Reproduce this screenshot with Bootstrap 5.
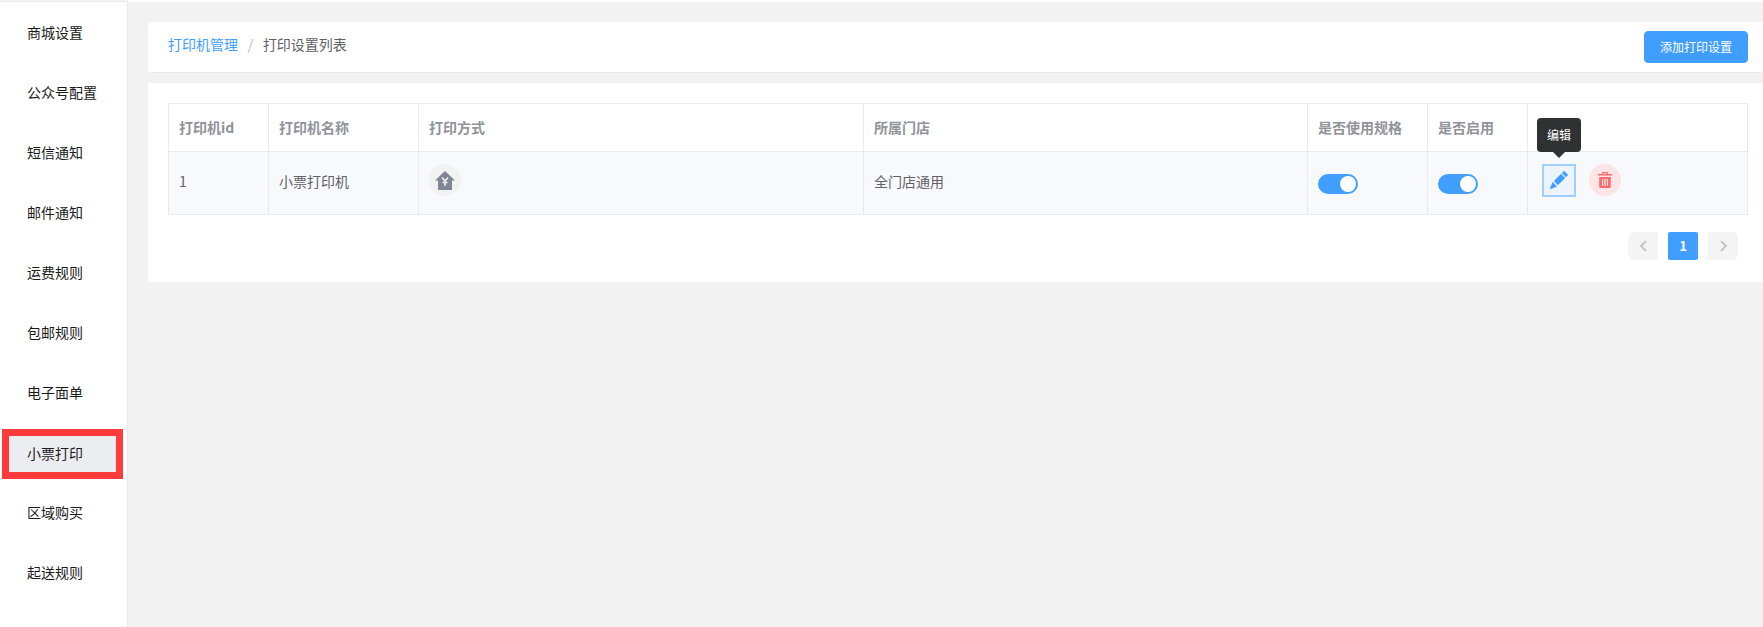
<!DOCTYPE html>
<html lang="zh">
<head>
<meta charset="utf-8">
<title>打印设置列表</title>
<link href="https://cdn.jsdelivr.net/npm/bootstrap@5.3.0/dist/css/bootstrap.min.css" rel="stylesheet">
<style>
html,body{height:627px;overflow:hidden}
body{font-family:"Noto Sans CJK SC","Liberation Sans",sans-serif;background:#f2f2f2;font-size:14px;color:#606266}
.shell{height:627px}
.side{width:128px;flex:none;background:#fff;border-right:1px solid #e8eaec;border-top:1px solid #e8eaec;margin-top:1px}
.side-link{height:60px;padding-left:27px;color:#1a1a1a;font-size:14px;text-decoration:none}
.side-link.on{height:50px;margin:7px 4px 3px 2px;border:7px solid #ff3b3b;padding:0 0 2px 18px;background:#ebedf1}
.main-col{min-width:0}
.topline{height:2px;background:#fff;flex:none}
.content{padding:20px 0 0 20px}
.head-panel{height:51px;background:#fff;border-bottom:1px solid #e8eaec;padding:0 15px 0 20px;margin-bottom:10px;border-radius:4px 0 0 0}
.breadcrumb{--bs-breadcrumb-margin-bottom:0;--bs-breadcrumb-divider-color:#b4b8c0;--bs-breadcrumb-item-active-color:#606266;--bs-breadcrumb-item-padding-x:9.7px;font-size:14px;margin-top:-5px}
.breadcrumb a{color:#409eff;text-decoration:none}
.add-btn{--bs-btn-bg:#409eff;--bs-btn-border-color:#409eff;--bs-btn-font-size:12px;--bs-btn-padding-x:15px;--bs-btn-padding-y:0;--bs-btn-border-radius:4px;height:32px;width:104px;white-space:nowrap}
.list-panel{height:199px;background:#fff;padding:20px 0 0 20px}
.print-table{--bs-table-border-color:#e8eaec;--bs-table-color:#606266;width:1579px;table-layout:fixed;margin:0;font-size:14px}
.print-table th{height:48px;color:#909399;font-weight:700;padding:0 10px;vertical-align:middle;font-size:14px}
.print-table td{height:63px;background:#f8f9fc;padding:0 10px;vertical-align:middle;font-size:14px}
.cell-txt{position:relative;top:-2px}
.round-ic{width:32px;height:32px;border-radius:50%;display:inline-flex;align-items:center;justify-content:center}
.ic-gray{background:#f2f2f2;position:relative;top:-3px}
.ic-red{background:#fde5e5;margin-left:13px;position:relative;top:-3px}
.ic-edit{width:34px;height:33px;background:#ecf5ff;border:2px solid #a0cfff;display:inline-flex;align-items:center;justify-content:center}
.toggle{width:40px;height:20px;border-radius:10px;background:#409eff;display:block;position:relative;top:1px}
.toggle::after{content:"";position:absolute;right:2px;top:2px;width:16px;height:16px;border-radius:50%;background:#fff}
.tip-wrap{position:relative;display:inline-flex;top:-3px}
.tip-box{position:absolute;left:-5px;top:-46px;width:44px;height:34px;background:#303133;color:#fff;font-size:12px;border-radius:4px;display:flex;align-items:center;justify-content:center}
.tip-box::after{content:"";position:absolute;left:16px;bottom:-6px;border:6px solid transparent;border-bottom:0;border-top-color:#303133}
.pager{gap:10px;margin:17px 0 0 0;width:1580px;padding-right:10px;box-sizing:border-box}
.pager .page-link{width:30px;height:28px;padding:0;display:flex;align-items:center;justify-content:center;border:0;border-radius:2px;background:#f4f4f5;color:#c0c4cc;font-size:13px;font-weight:700}
.pager .page-item:not(:first-child) .page-link{margin-left:0}
.pager .active .page-link{background:#409eff;color:#fff}
</style>
</head>
<body>
<div class="d-flex shell">
  <nav class="side d-flex flex-column">
    <a class="side-link d-flex align-items-center" href="#">商城设置</a>
    <a class="side-link d-flex align-items-center" href="#">公众号配置</a>
    <a class="side-link d-flex align-items-center" href="#">短信通知</a>
    <a class="side-link d-flex align-items-center" href="#">邮件通知</a>
    <a class="side-link d-flex align-items-center" href="#">运费规则</a>
    <a class="side-link d-flex align-items-center" href="#">包邮规则</a>
    <a class="side-link d-flex align-items-center" href="#">电子面单</a>
    <a class="side-link on d-flex align-items-center" href="#">小票打印</a>
    <a class="side-link d-flex align-items-center" href="#">区域购买</a>
    <a class="side-link d-flex align-items-center" href="#">起送规则</a>
  </nav>
  <div class="main-col flex-grow-1 d-flex flex-column">
    <div class="topline"></div>
    <div class="content">
      <div class="head-panel d-flex justify-content-between align-items-center">
        <nav aria-label="breadcrumb">
          <ol class="breadcrumb">
            <li class="breadcrumb-item"><a href="#">打印机管理</a></li>
            <li class="breadcrumb-item active" aria-current="page">打印设置列表</li>
          </ol>
        </nav>
        <button type="button" class="btn btn-primary add-btn">添加打印设置</button>
      </div>
      <div class="list-panel">
        <table class="table table-bordered print-table">
          <colgroup>
            <col style="width:100px"><col style="width:150px"><col style="width:445px"><col style="width:444px"><col style="width:120px"><col style="width:100px"><col style="width:220px">
          </colgroup>
          <thead>
            <tr><th>打印机id</th><th>打印机名称</th><th>打印方式</th><th>所属门店</th><th>是否使用规格</th><th>是否启用</th><th></th></tr>
          </thead>
          <tbody>
            <tr>
              <td><span class="cell-txt">1</span></td>
              <td><span class="cell-txt">小票打印机</span></td>
              <td><span class="round-ic ic-gray">
                <svg width="20" height="19" viewBox="0 0 20 19"><path fill="#808695" d="M10 0 20 9.500h-3V19H3V9.500H0z"/><path fill="none" stroke="#f2f2f2" stroke-width="1.500" d="M7 6.500 10 10l3-3.500M10 10v5M7.500 11.500h5"/></svg>
              </span></td>
              <td><span class="cell-txt">全门店通用</span></td>
              <td><span class="toggle"></span></td>
              <td><span class="toggle"></span></td>
              <td>
                <div class="d-flex align-items-center ps-1">
                  <span class="tip-wrap">
                    <span class="tip-box">编辑</span>
                    <span class="ic-edit"><svg width="18" height="18" viewBox="0 0 16 16"><path fill="#409eff" d="M12.854.146a.5.5 0 0 0-.707 0L10.500 1.793 14.207 5.500l1.647-1.646a.5.5 0 0 0 0-.708l-3-3zm.646 6.061L9.793 2.500 3.293 9H3.500a.5.5 0 0 1 .5.5v.5h.5a.5.5 0 0 1 .5.5v.5h.5a.5.5 0 0 1 .5.5v.5h.5a.5.5 0 0 1 .5.5v.207l6.500-6.500zm-7.468 7.468A.5.5 0 0 1 6 13.500V13h-.5a.5.5 0 0 1-.5-.5V12h-.5a.5.5 0 0 1-.5-.5V11h-.5a.5.5 0 0 1-.5-.5V10h-.5a.499.499 0 0 1-.175-.032l-.179.178a.5.5 0 0 0-.11.168l-2 5a.5.5 0 0 0 .65.65l5-2a.5.5 0 0 0 .168-.11l.178-.178z"/></svg></span>
                  </span>
                  <span class="round-ic ic-red">
                    <svg width="16" height="16" viewBox="0 0 16 16"><path fill="#ff6b6b" d="M6 0h4a1 1 0 0 1 1 1v1h4v1.500H1V2h4V1a1 1 0 0 1 1-1zm.2 1.200V2h3.600v-.8zM2.200 5h11.600v9.500A1.500 1.500 0 0 1 12.300 16H3.700A1.500 1.500 0 0 1 2.200 14.500zm2.800 2v7h1.200V7zm2.400 0v7h1.200V7zm2.400 0v7H11V7z"/></svg>
                  </span>
                </div>
              </td>
            </tr>
          </tbody>
        </table>
        <ul class="pagination pager justify-content-end mb-0">
          <li class="page-item"><a class="page-link" href="#" aria-label="上一页"><svg width="9" height="12" viewBox="0 0 9 12"><path fill="none" stroke="#c0c4cc" stroke-width="1.800" d="M7 1 2 6l5 5"/></svg></a></li>
          <li class="page-item active"><a class="page-link" href="#">1</a></li>
          <li class="page-item"><a class="page-link" href="#" aria-label="下一页"><svg width="9" height="12" viewBox="0 0 9 12"><path fill="none" stroke="#c0c4cc" stroke-width="1.800" d="m2 1 5 5-5 5"/></svg></a></li>
        </ul>
      </div>
    </div>
  </div>
</div>
<script src="https://cdn.jsdelivr.net/npm/bootstrap@5.3.0/dist/js/bootstrap.bundle.min.js"></script>
</body>
</html>
